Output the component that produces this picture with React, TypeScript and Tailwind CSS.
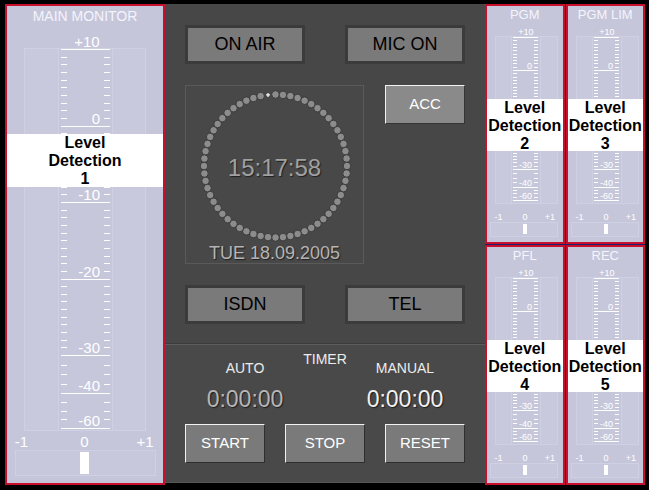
import React from "react";

type Cfg = {
  W: number;
  H: number;
  off: number;
  y: (db: number) => number;
  tl: [number, number];
  tr: [number, number];
  labelX: number;
  topLabelX: number;
  fs: number;
  outer: [number, number, number, number];
  col: [number, number];
  bottomY: number;
  bl: [number, number, number];
  barBox: [number, number, number, number];
  bar: [number, number, number, number];
  lblDy: number;
  labels: number[];
};

const BIG: Cfg = {
  W: 156,
  H: 457,
  off: 26,
  y: (db) => (db >= -30 ? 49 + (10 - db) * 7.65 : db >= -40 ? 355 + (-30 - db) * 3.8 : 393 + (-40 - db) * 1.75),
  tl: [54, 60],
  tr: [97, 103],
  labelX: 93,
  topLabelX: 80,
  fs: 15,
  outer: [17, 22, 138, 404],
  col: [51, 105],
  bottomY: 421,
  bl: [14.5, 77.5, 138],
  barBox: [8, 424, 148, 449],
  bar: [73, 426, 82, 448],
  lblDy: 2.5,
  labels: [0, -10, -20, -30, -40, -60],
};

const SMALL: Cfg = {
  W: 75,
  H: 218,
  off: 24,
  y: (db) => (db >= -30 ? 37 + (10 - db) * 3.3 : db >= -40 ? 169 + (-30 - db) * 1.75 : 186.5 + (-40 - db) * 0.675),
  tl: [26, 30],
  tr: [47, 51],
  labelX: 45,
  topLabelX: 39,
  fs: 9,
  outer: [8, 12, 70, 179],
  col: [24, 53],
  bottomY: 196,
  bl: [11.5, 38, 63],
  barBox: [3, 198, 70, 212],
  bar: [36, 200, 40, 210],
  lblDy: 1.2,
  labels: [0, -30, -40, -60],
};

function Scale({ big }: { big: boolean }) {
  const c = big ? BIG : SMALL;
  const Y = (db: number) => Math.round(c.y(db) - c.off) + 0.5;
  const minor: number[] = [];
  for (let d = 9; d > -30; d--) if (d % 10 !== 0) minor.push(d);
  minor.push(-32.5, -35, -37.5, -45, -50, -55);
  const majors = [10, 0, -10, -20, -30, -40, -60];
  const font = "Liberation Sans, Arial, sans-serif";
  return (
    <svg width={c.W} height={c.H} className="block" shapeRendering="crispEdges">
      <rect x={c.outer[0] + 0.5} y={c.outer[1] + 0.5} width={c.outer[2] - c.outer[0]} height={c.outer[3] - c.outer[1]} fill="#c9c9dd" stroke="#cfd0e3" />
      <rect x={c.col[0] + 0.5} y={c.outer[1] + 0.5} width={c.col[1] - c.col[0]} height={c.outer[3] - c.outer[1]} fill="#c7c7db" stroke="#cfd0e3" />
      {minor.map((d) => (
        <g key={d} stroke="#ffffff" strokeWidth={1}>
          <line x1={c.tl[0]} x2={c.tl[1]} y1={Y(d)} y2={Y(d)} />
          <line x1={c.tr[0]} x2={c.tr[1]} y1={Y(d)} y2={Y(d)} />
        </g>
      ))}
      {majors.map((d) => (
        <line key={d} x1={c.tl[0]} x2={c.tr[1]} y1={Y(d)} y2={Y(d)} stroke="#ffffff" strokeWidth={big ? 1.5 : 1} />
      ))}
      <text x={c.topLabelX} y={Y(10) - 3} fontSize={c.fs} fill="#ffffff" textAnchor="middle" fontFamily={font}>
        +10
      </text>
      {c.labels.map((d) => (
        <text key={d} x={c.labelX} y={Y(d) - c.lblDy} fontSize={c.fs} fill="#ffffff" textAnchor="end" fontFamily={font}>
          {d === 0 ? "0" : String(d)}
        </text>
      ))}
      <text x={c.bl[0]} y={c.bottomY} fontSize={c.fs} fill="#ffffff" textAnchor="middle" fontFamily={font}>
        -1
      </text>
      <text x={c.bl[1]} y={c.bottomY} fontSize={c.fs} fill="#ffffff" textAnchor="middle" fontFamily={font}>
        0
      </text>
      <text x={c.bl[2]} y={c.bottomY} fontSize={c.fs} fill="#ffffff" textAnchor="middle" fontFamily={font}>
        +1
      </text>
      <rect x={c.barBox[0] + 0.5} y={c.barBox[1] + 0.5} width={c.barBox[2] - c.barBox[0]} height={c.barBox[3] - c.barBox[1]} fill="#c8c8dc" stroke="#cfd0e3" />
      <rect x={c.bar[0]} y={c.bar[1]} width={c.bar[2] - c.bar[0]} height={c.bar[3] - c.bar[1]} fill="#ffffff" />
    </svg>
  );
}

function Meter({ title, n, big }: { title: string; n: number; big?: boolean }) {
  return (
    <div
      className={
        big
          ? "relative w-[160px] h-[481px] border-2 border-[#c8102e] bg-[#c6c6da] overflow-hidden"
          : "relative h-full w-full border-2 border-[#c8102e] bg-[#c6c6da] overflow-hidden"
      }
    >
      <div
        className={
          big
            ? "h-[20px] leading-[20px] text-[14px] text-center text-[#f4f4fc] whitespace-nowrap"
            : "h-[18px] leading-[18px] text-[13px] text-center text-[#f4f4fc] whitespace-nowrap"
        }
      >
        {title}
      </div>
      <Scale big={!!big} />
      <div
        className={
          big
            ? "absolute left-0 right-0 top-[128px] h-[53px] bg-white text-black font-bold text-[16px] leading-[18px] text-center"
            : "absolute left-0 right-0 top-[93px] h-[52px] bg-white text-black font-bold text-[16px] leading-[18px] text-center whitespace-nowrap"
        }
      >
        Level
        <br />
        Detection
        <br />
        {n}
      </div>
    </div>
  );
}

function DarkButton({ label }: { label: string }) {
  return (
    <div className="flex items-center justify-center w-[120px] h-[39px] border-[3px] border-[#3b3b3b] bg-[#7a7a7a] text-black text-[18px]">
      {label}
    </div>
  );
}

function LightButton({ label }: { label: string }) {
  return (
    <div className="flex items-center justify-center w-[80px] h-[39px] border border-t-[#f2f2f2] border-l-[#f2f2f2] border-r-[#2e2e2e] border-b-[#2e2e2e] bg-[#7a7a7a] text-white text-[15px]">
      {label}
    </div>
  );
}

function Clock() {
  const cx = 89.5;
  const cy = 80;
  const r = 71.5;
  const dots = [];
  for (let i = 0; i < 59; i++) {
    const a = ((i * 6 - 90) * Math.PI) / 180;
    dots.push(
      <circle key={i} cx={cx + r * Math.cos(a)} cy={cy + r * Math.sin(a)} r={3.8} fill="#8c8c8c" stroke="#353535" strokeWidth={0.9} />
    );
  }
  const a59 = ((59 * 6 - 90) * Math.PI) / 180;
  const px = cx + r * Math.cos(a59);
  const py = cy + r * Math.sin(a59);
  return (
    <div className="relative w-[179px] h-[179px] border border-[#5a5a5a] bg-[#484848]">
      <svg width={177} height={177} className="absolute left-0 top-0">
        {dots}
        <line x1={px - 2} x2={px + 2} y1={py} y2={py} stroke="#ffffff" strokeWidth={1.2} />
        <line x1={px} x2={px} y1={py - 2} y2={py + 2} stroke="#ffffff" strokeWidth={1.2} />
      </svg>
      <div className="relative flex flex-col items-center">
        <div className="mt-[68px] h-[28px] leading-[28px] text-[24px] text-[#a0a0a0] [text-shadow:1px_1px_1px_#202020]">15:17:58</div>
        <div className="mt-[61px] h-[20px] leading-[20px] text-[18px] text-[#b4b4b4] [text-shadow:1px_1px_1px_#202020] whitespace-nowrap">
          TUE 18.09.2005
        </div>
      </div>
    </div>
  );
}

export default function App() {
  return (
    <div className="w-[649px] h-[490px] bg-black pl-[5px] pt-[4px] flex items-start font-['Liberation_Sans',Arial,sans-serif] overflow-hidden">
      <Meter title="MAIN MONITOR" n={1} big />

      <div className="w-[320px] h-[479px] bg-[#474747] flex flex-col">
        <div className="h-[340px] border-b border-[#3c3c3c] pt-[21px] px-[20px] flex flex-col">
          <div className="flex gap-[40px]">
            <DarkButton label="ON AIR" />
            <DarkButton label="MIC ON" />
          </div>
          <div className="mt-[21px] flex gap-[21px] items-start">
            <Clock />
            <div className="flex items-center justify-center w-[80px] h-[39px] border border-t-[#f2f2f2] border-l-[#f2f2f2] border-r-[#353535] border-b-[#353535] bg-[#8a8a8a] text-white text-[15px]">
              ACC
            </div>
          </div>
          <div className="mt-[21px] flex gap-[40px]">
            <DarkButton label="ISDN" />
            <DarkButton label="TEL" />
          </div>
        </div>

        <div className="flex-1 border-t border-b border-t-[#5c5c5c] border-b-[#565656] bg-[#494949] pt-[6px] px-[20px] flex flex-col">
          <div className="flex items-start">
            <div className="w-[120px] flex flex-col items-center">
              <div className="mt-[9px] h-[16px] leading-[16px] text-[14px] text-[#ececec]">AUTO</div>
              <div className="mt-[10px] h-[26px] leading-[26px] text-[23px] text-[#b6b6b6] [text-shadow:1px_1px_1px_#1e1e1e]">0:00:00</div>
            </div>
            <div className="w-[40px] flex justify-center">
              <div className="h-[16px] leading-[16px] text-[14px] text-[#ececec] whitespace-nowrap">TIMER</div>
            </div>
            <div className="w-[120px] flex flex-col items-center">
              <div className="mt-[9px] h-[16px] leading-[16px] text-[14px] text-[#ececec]">MANUAL</div>
              <div className="mt-[10px] h-[26px] leading-[26px] text-[23px] text-[#f2f2f2] [text-shadow:1px_1px_1px_#1e1e1e]">0:00:00</div>
            </div>
          </div>
          <div className="mt-[12px] flex gap-[20px]">
            <LightButton label="START" />
            <LightButton label="STOP" />
            <LightButton label="RESET" />
          </div>
        </div>
      </div>

      <div className="w-[160px] h-[481px] bg-[#1b1f6b] grid grid-cols-2 grid-rows-2 gap-px">
        <Meter title="PGM" n={2} />
        <Meter title="PGM LIM" n={3} />
        <Meter title="PFL" n={4} />
        <Meter title="REC" n={5} />
      </div>
    </div>
  );
}
